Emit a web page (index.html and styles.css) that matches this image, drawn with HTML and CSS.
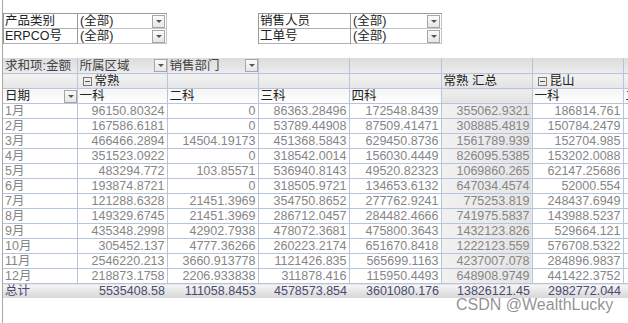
FILE: index.html
```html
<!DOCTYPE html>
<html lang="zh-CN">
<head>
<meta charset="utf-8">
<title>数据透视表</title>
<link rel="stylesheet" href="styles.css">
</head>
<body>
<div class="sheet">
  <div class="filters">
    <div class="filter">
      <div class="f-label">产品类别</div><div class="f-value">(全部)<span class="dd"></span></div>
      <div class="f-label">ERPCO号</div><div class="f-value">(全部)<span class="dd"></span></div>
    </div>
    <div class="filter filter2">
      <div class="f-label">销售人员</div><div class="f-value">(全部)<span class="dd"></span></div>
      <div class="f-label">工单号</div><div class="f-value">(全部)<span class="dd"></span></div>
    </div>
  </div>

  <table class="pivot">
    <colgroup>
      <col class="c0"><col class="c1"><col class="c2"><col class="c3"><col class="c4"><col class="c5"><col class="c6"><col class="c7">
    </colgroup>
    <thead>
      <tr class="h1">
        <td class="lbl">求和项:金额</td>
        <td class="lbl">所属区域<span class="dd"></span></td>
        <td class="lbl">销售部门<span class="dd"></span></td>
        <td></td><td></td><td class="tot"></td><td></td><td></td>
      </tr>
      <tr class="h2">
        <td></td>
        <td class="lbl"><span class="mbox"></span>常熟</td>
        <td></td><td></td><td></td>
        <td class="lbl tot">常熟 汇总</td>
        <td class="lbl"><span class="mbox"></span>昆山</td>
        <td></td>
      </tr>
      <tr class="h3">
        <td class="lbl">日期<span class="dd"></span></td>
        <td class="lbl">一科</td><td class="lbl">二科</td><td class="lbl">三科</td><td class="lbl">四科</td>
        <td class="tot"></td>
        <td class="lbl">一科</td><td class="lbl">二科</td>
      </tr>
    </thead>
    <tbody>
      <tr><td>1月</td><td>96150.80324</td><td>0</td><td>86363.28496</td><td>172548.8439</td><td class="tot">355062.9321</td><td>186814.761</td><td></td></tr>
      <tr><td>2月</td><td>167586.6181</td><td>0</td><td>53789.44908</td><td>87509.41471</td><td class="tot">308885.4819</td><td>150784.2479</td><td></td></tr>
      <tr><td>3月</td><td>466466.2894</td><td>14504.19173</td><td>451368.5843</td><td>629450.8736</td><td class="tot">1561789.939</td><td>152704.985</td><td></td></tr>
      <tr><td>4月</td><td>351523.0922</td><td>0</td><td>318542.0014</td><td>156030.4449</td><td class="tot">826095.5385</td><td>153202.0088</td><td></td></tr>
      <tr><td>5月</td><td>483294.772</td><td>103.85571</td><td>536940.8143</td><td>49520.82323</td><td class="tot">1069860.265</td><td>62147.25686</td><td></td></tr>
      <tr><td>6月</td><td>193874.8721</td><td>0</td><td>318505.9721</td><td>134653.6132</td><td class="tot">647034.4574</td><td>52000.554</td><td></td></tr>
      <tr><td>7月</td><td>121288.6328</td><td>21451.3969</td><td>354750.8652</td><td>277762.9241</td><td class="tot">775253.819</td><td>248437.6949</td><td></td></tr>
      <tr><td>8月</td><td>149329.6745</td><td>21451.3969</td><td>286712.0457</td><td>284482.4666</td><td class="tot">741975.5837</td><td>143988.5237</td><td></td></tr>
      <tr><td>9月</td><td>435348.2998</td><td>42902.7938</td><td>478072.3681</td><td>475800.3643</td><td class="tot">1432123.826</td><td>529664.121</td><td></td></tr>
      <tr><td>10月</td><td>305452.137</td><td>4777.36266</td><td>260223.2174</td><td>651670.8418</td><td class="tot">1222123.559</td><td>576708.5322</td><td></td></tr>
      <tr><td>11月</td><td>2546220.213</td><td>3660.913778</td><td>1121426.835</td><td>565699.1163</td><td class="tot">4237007.078</td><td>284896.9837</td><td></td></tr>
      <tr><td>12月</td><td>218873.1758</td><td>2206.933838</td><td>311878.416</td><td>115950.4493</td><td class="tot">648908.9749</td><td>441422.3752</td><td></td></tr>
    </tbody>
    <tfoot>
      <tr><td>总计</td><td>5535408.58</td><td>111058.8453</td><td>4578573.854</td><td>3601080.176</td><td>13826121.45</td><td>2982772.044</td><td></td></tr>
    </tfoot>
  </table>
</div>
<div class="watermark">CSDN @WealthLucky</div>
</body>
</html>
```
FILE: styles.css
```css
html, body {
  margin: 0;
  padding: 0;
  background: #ffffff;
  overflow: hidden;
}
body {
  width: 628px;
  height: 323px;
  position: relative;
  font-family: "Liberation Sans", "Noto Sans CJK SC", sans-serif;
  font-size: 12.5px;
  color: #333;
}
.sheet {
  margin-left: 2px;
  border-left: 1px solid #a8a8a8;
  height: 323px;
  padding-top: 13px;
  box-sizing: border-box;
}

/* report filters */
.filters {
  display: flex;
  gap: 91px;
  height: 31px;
  margin-bottom: 14px;
}
.filter {
  display: grid;
  grid-template-columns: 74px 89px;
  grid-template-rows: 15px 15px;
  border-top: 1px solid #9a9a9a;
  border-left: 1px solid #9a9a9a;
  width: 163px;
}
.filter2 {
  grid-template-columns: 92px 91px;
  width: 183px;
}
.f-label, .f-value {
  line-height: 14px;
  height: 15px;
  box-sizing: border-box;
  padding-left: 1px;
  white-space: nowrap;
  color: #222;
}
.f-label {
  border-right: 1px solid #9a9a9a;
  border-bottom: 1px solid #b0b0b0;
}
.f-value {
  position: relative;
  border-right: 1px solid #c4c4c4;
  border-bottom: 1px solid #c4c4c4;
  padding-left: 2px;
}
.f-value .dd {
  top: 1px;
  right: 1px;
}

/* dropdown button */
.dd {
  position: absolute;
  width: 13px;
  height: 13px;
  box-sizing: border-box;
  border: 1px solid #a6a6a6;
  background: linear-gradient(#fbfbfb, #e6e6e6);
}
.dd::after {
  content: "";
  position: absolute;
  left: 3px;
  top: 4px;
  border-left: 3px solid transparent;
  border-right: 3px solid transparent;
  border-top: 3px solid #555;
}

/* pivot table */
.pivot {
  border-collapse: collapse;
  table-layout: fixed;
  width: 711px;
}
.c0 { width: 74px; }
.c1 { width: 90px; }
.c2 { width: 91px; }
.c3 { width: 91px; }
.c4 { width: 92px; }
.c5 { width: 91px; }
.c6 { width: 91px; }
.c7 { width: 91px; }

.pivot td {
  height: 14px;
  padding: 0 2px 0 2px;
  line-height: 14px;
  border: 1px solid #b6c5dc;
  white-space: nowrap;
  overflow: hidden;
  text-align: right;
  color: #868686;
  position: relative;
}
.pivot td:first-child {
  text-align: left;
  border-left: none;
}
.pivot thead td {
  text-align: left;
  color: #2a2a2a;
}
.pivot thead td.lbl { color: #222; }
.pivot tr.h1 td {
  height: 15px;
  border-top: none;
  background: linear-gradient(#dcdcdc, #ececec);
  color: #444;
}
.pivot tr.h2 td {
  background: linear-gradient(#f3f3f3, #e6e6e6);
}
.pivot tr.h3 td {
  background: linear-gradient(#f4f4f4, #ffffff);
}
.pivot tr.h1 td .dd,
.pivot tr.h3 td .dd {
  right: 0;
  top: 1px;
}
.pivot td.tot {
  background: linear-gradient(to right, #f1f1f1, #e4e4e4);
}
.pivot tr.h2 td.tot,
.pivot tr.h3 td.tot {
  background: linear-gradient(#eeeeee, #e2e2e2);
}

.mbox {
  display: inline-block;
  width: 9px;
  height: 9px;
  box-sizing: border-box;
  border: 1px solid #777;
  margin: 0 3px 0 3px;
  vertical-align: -1px;
  position: relative;
}
.mbox::after {
  content: "";
  position: absolute;
  left: 1px;
  right: 1px;
  top: 3px;
  height: 1px;
  background: #555;
}

.pivot tfoot td {
  border: none;
  border-top: 1px solid #b6c5dc;
  background: linear-gradient(#f6f6f6, #d6d6d6);
  color: #4a4a72;
  height: 14px;
}
.pivot tfoot td:first-child {
  color: #4a4a72;
}

.watermark {
  position: absolute;
  left: 456px;
  top: 296px;
  font-family: "Liberation Sans", sans-serif;
  font-size: 16px;
  color: rgba(110, 110, 110, 0.75);
  white-space: nowrap;
}
```
